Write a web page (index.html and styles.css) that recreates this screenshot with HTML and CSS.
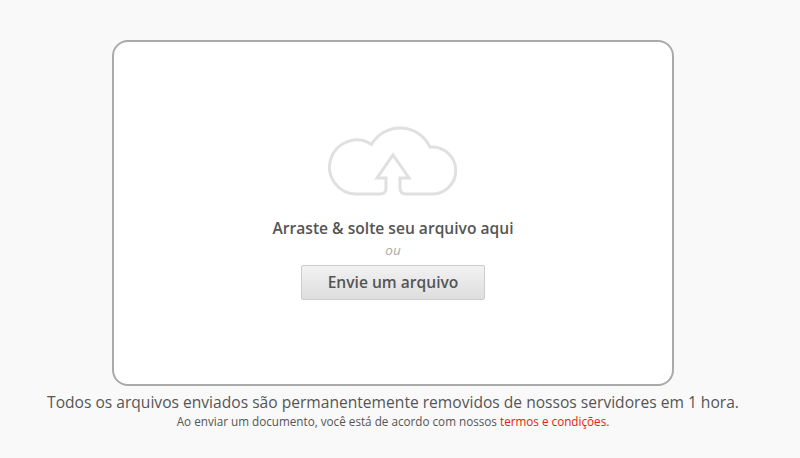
FILE: index.html
```html
<!DOCTYPE html>
<html lang="pt">
<head>
  <meta charset="utf-8">
  <title>Envie um arquivo</title>
  <link rel="stylesheet" href="styles.css">
</head>
<body>
<div class="upload">
  <div class="upload__box">
    <svg class="upload__icon" width="130" height="72" viewBox="0 0 130 72" fill="none">
      <path d="M58 52V62Q58 68 52 68H28.5A27 27 0 1 1 43.5 18.5A33 33 0 0 1 102 21A23.6 23.6 0 1 1 102 68H78Q72 68 72 62V52H81L65 29L49 52Z" stroke="#e0e0e0" stroke-width="3"/>
    </svg>
    <div class="upload__title">Arraste &amp; solte seu arquivo aqui</div>
    <div class="upload__or">ou</div>
    <a class="upload__btn" href="#">Envie um arquivo</a>
  </div>
  <p class="upload__note">Todos os arquivos enviados são permanentemente removidos de nossos servidores em 1 hora.</p>
  <p class="upload__terms">Ao enviar um documento, você está de acordo com nossos <a href="#">termos e condições</a>.</p>
</div>
</body>
</html>
```
FILE: styles.css
```css
body {
  margin: 0;
  background: #f9f9f9;
  font-family: "Open Sans", sans-serif;
  color: #555;
}
.upload {
  display: flex;
  flex-direction: column;
  align-items: center;
  padding-top: 40px;
  width: 786px;
}
.upload__box {
  box-sizing: border-box;
  width: 562px;
  height: 346px;
  padding-top: 84px;
  background: #fff;
  border: 2px solid #aaa;
  border-radius: 16px;
  display: flex;
  flex-direction: column;
  align-items: center;
}
.upload__icon {
  display: block;
}
.upload__title {
  margin-top: 19px;
  font-size: 15.6px;
  font-weight: 600;
  line-height: 22px;
}
.upload__or {
  margin-top: 2px;
  font-size: 13.5px;
  font-style: italic;
  line-height: 18px;
  color: #aaa;
}
.upload__btn {
  box-sizing: border-box;
  margin-top: 6px;
  width: 184px;
  height: 35px;
  line-height: 33px;
  text-align: center;
  font-size: 15.6px;
  font-weight: 600;
  color: #555;
  text-decoration: none;
  background: linear-gradient(#f2f2f2, #dedede);
  border: 1px solid #ccc;
  border-radius: 2px;
}
.upload__note {
  margin: 5px 0 0;
  font-size: 15.6px;
  line-height: 22px;
}
.upload__terms {
  margin: 0;
  font-size: 11.7px;
  line-height: 16px;
}
.upload__terms a {
  color: #e8200f;
  text-decoration: none;
}
```
